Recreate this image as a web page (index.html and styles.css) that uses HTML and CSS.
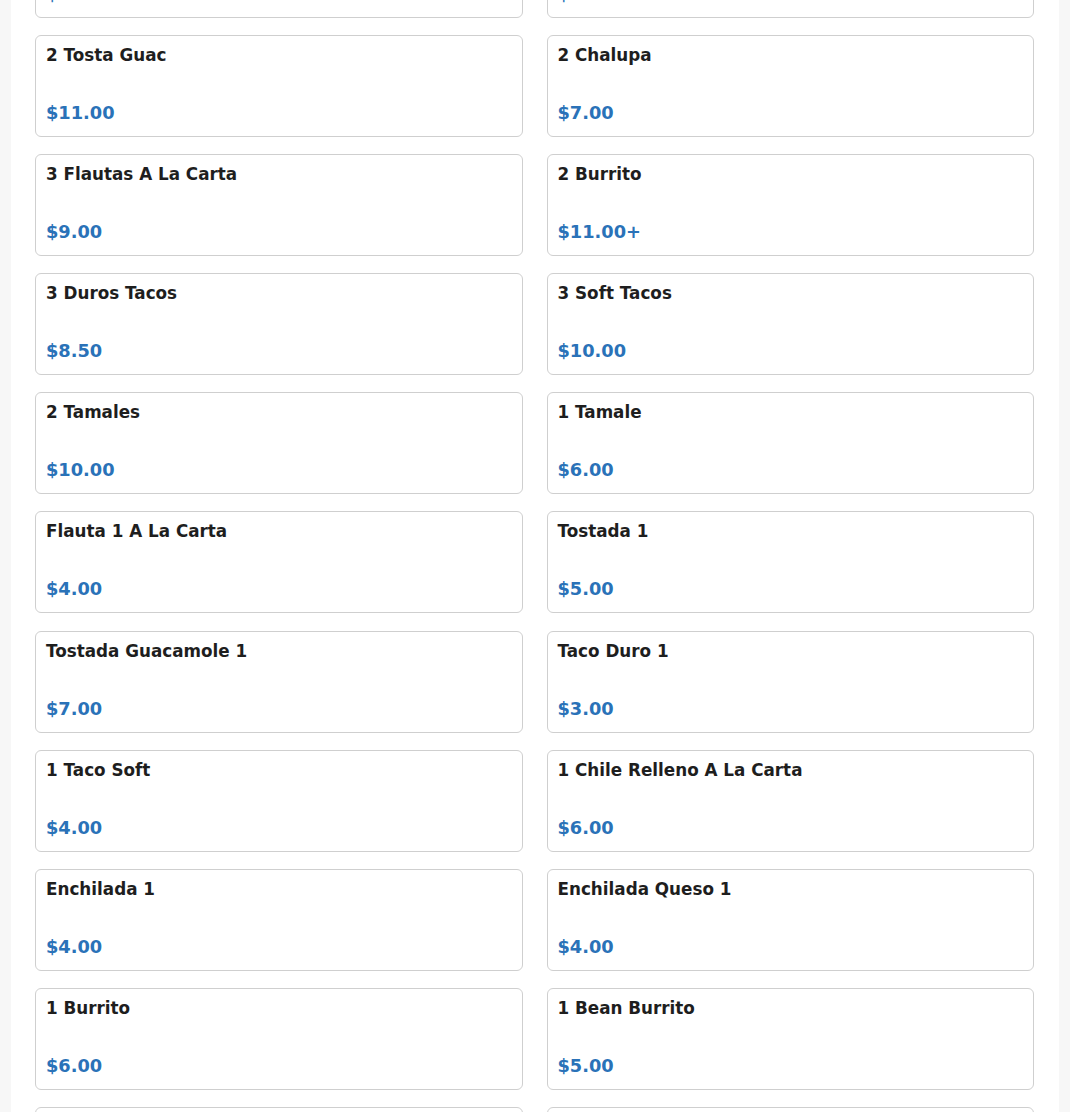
FILE: index.html
```html
<!DOCTYPE html>
<html lang="en">
<head>
<meta charset="utf-8">
<title>Menu</title>
<link rel="stylesheet" href="styles.css">
</head>
<body>
<main class="page">
  <section class="menu-grid">
    <div class="item"><h3 class="item-name">2 Tosta Regular</h3><p class="item-price">$10.00</p></div>
    <div class="item"><h3 class="item-name">2 Tostada</h3><p class="item-price">$10.00</p></div>
    <div class="item"><h3 class="item-name">2 Tosta Guac</h3><p class="item-price">$11.00</p></div>
    <div class="item"><h3 class="item-name">2 Chalupa</h3><p class="item-price">$7.00</p></div>
    <div class="item"><h3 class="item-name">3 Flautas A La Carta</h3><p class="item-price">$9.00</p></div>
    <div class="item"><h3 class="item-name">2 Burrito</h3><p class="item-price">$11.00+</p></div>
    <div class="item"><h3 class="item-name">3 Duros Tacos</h3><p class="item-price">$8.50</p></div>
    <div class="item"><h3 class="item-name">3 Soft Tacos</h3><p class="item-price">$10.00</p></div>
    <div class="item"><h3 class="item-name">2 Tamales</h3><p class="item-price">$10.00</p></div>
    <div class="item"><h3 class="item-name">1 Tamale</h3><p class="item-price">$6.00</p></div>
    <div class="item"><h3 class="item-name">Flauta 1 A La Carta</h3><p class="item-price">$4.00</p></div>
    <div class="item"><h3 class="item-name">Tostada 1</h3><p class="item-price">$5.00</p></div>
    <div class="item"><h3 class="item-name">Tostada Guacamole 1</h3><p class="item-price">$7.00</p></div>
    <div class="item"><h3 class="item-name">Taco Duro 1</h3><p class="item-price">$3.00</p></div>
    <div class="item"><h3 class="item-name">1 Taco Soft</h3><p class="item-price">$4.00</p></div>
    <div class="item"><h3 class="item-name">1 Chile Relleno A La Carta</h3><p class="item-price">$6.00</p></div>
    <div class="item"><h3 class="item-name">Enchilada 1</h3><p class="item-price">$4.00</p></div>
    <div class="item"><h3 class="item-name">Enchilada Queso 1</h3><p class="item-price">$4.00</p></div>
    <div class="item"><h3 class="item-name">1 Burrito</h3><p class="item-price">$6.00</p></div>
    <div class="item"><h3 class="item-name">1 Bean Burrito</h3><p class="item-price">$5.00</p></div>
    <div class="item"><h3 class="item-name">1 Quesadilla</h3><p class="item-price">$6.00</p></div>
    <div class="item"><h3 class="item-name">1 Sope</h3><p class="item-price">$5.00</p></div>
  </section>
</main>
</body>
</html>
```

FILE: styles.css
```css
html, body {
  margin: 0;
  padding: 0;
  background: #f7f7f7;
  font-family: "DejaVu Sans", sans-serif;
  overflow: hidden;
}

.page {
  margin: -84px 11px 0;
  background: #ffffff;
  padding: 0 25px 40px 24px;
}

.menu-grid {
  display: grid;
  grid-template-columns: 1fr 1fr;
  column-gap: 24px;
  row-gap: 17.1px;
}

.item {
  border: 1px solid #cfcfcf;
  border-radius: 6px;
  padding: 9px 10px 13px;
  box-sizing: border-box;
  height: 102px;
  display: flex;
  flex-direction: column;
  justify-content: space-between;
}

.item-name {
  margin: 0;
  font-size: 16.8px;
  font-weight: bold;
  color: #1e1e1e;
  line-height: 20px;
}

.item-price {
  margin: 0;
  font-size: 17.8px;
  font-weight: bold;
  color: #2a72b8;
  line-height: 20px;
}
```
